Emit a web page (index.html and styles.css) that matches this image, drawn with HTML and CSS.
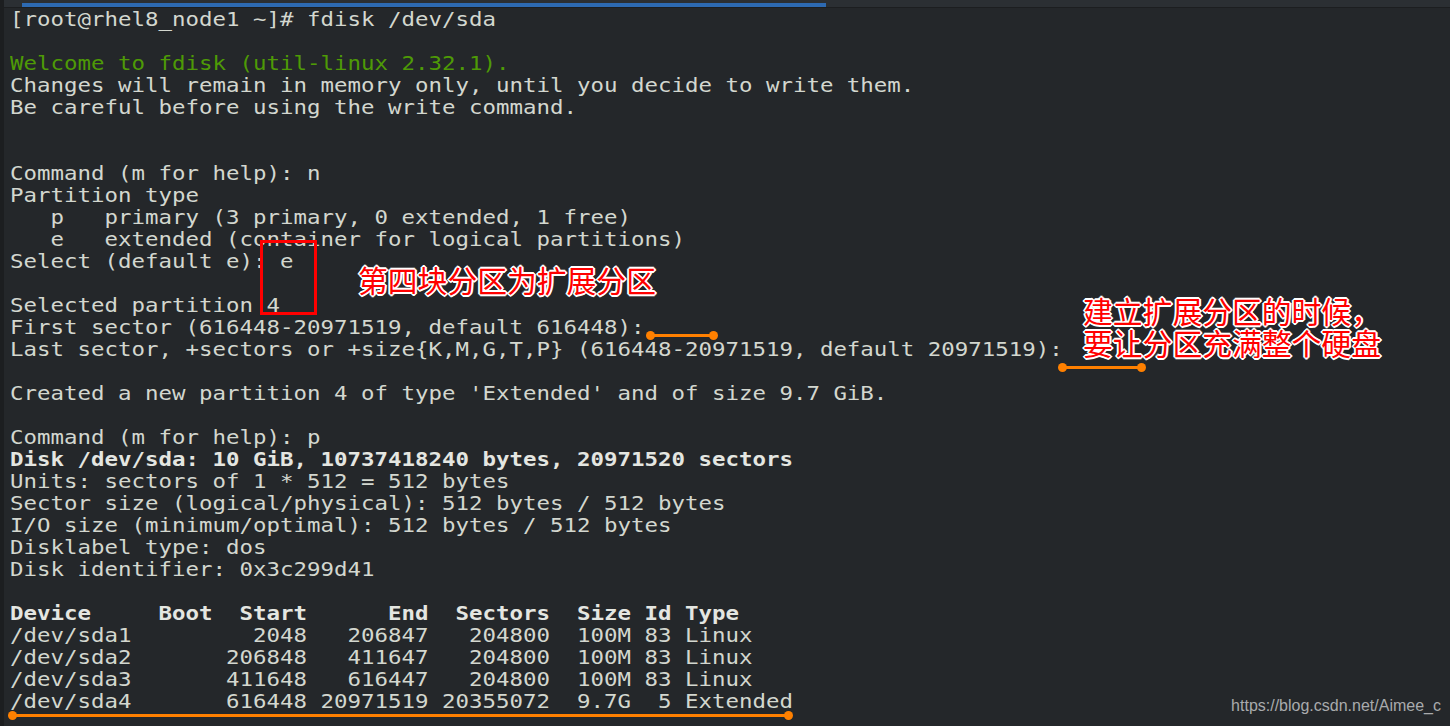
FILE: index.html
```html
<!DOCTYPE html>
<html lang="zh-CN">
<head>
<meta charset="utf-8">
<title>fdisk</title>
<link rel="stylesheet" href="styles.css">
</head>
<body>
<div class="window">
  <div class="topbar"><div class="tab-indicator"></div></div>
  <div class="term-area">
<pre class="term">[root@rhel8_node1 ~]# fdisk /dev/sda

<span class="green">Welcome to fdisk (util-linux 2.32.1).</span>
Changes will remain in memory only, until you decide to write them.
Be careful before using the write command.


Command (m for help): n
Partition type
   p   primary (3 primary, 0 extended, 1 free)
   e   extended (container for logical partitions)
Select (default e): e

Selected partition 4
First sector (616448-20971519, default 616448): 
Last sector, +sectors or +size{K,M,G,T,P} (616448-20971519, default 20971519): 

Created a new partition 4 of type 'Extended' and of size 9.7 GiB.

Command (m for help): p
<b>Disk /dev/sda: 10 GiB, 10737418240 bytes, 20971520 sectors</b>
Units: sectors of 1 * 512 = 512 bytes
Sector size (logical/physical): 512 bytes / 512 bytes
I/O size (minimum/optimal): 512 bytes / 512 bytes
Disklabel type: dos
Disk identifier: 0x3c299d41

<b>Device     Boot  Start      End  Sectors  Size Id Type</b>
/dev/sda1         2048   206847   204800  100M 83 Linux
/dev/sda2       206848   411647   204800  100M 83 Linux
/dev/sda3       411648   616447   204800  100M 83 Linux
/dev/sda4       616448 20971519 20355072  9.7G  5 Extended</pre>
  </div>

  <div class="mark-box"></div>
  <div class="note note-1">第四块分区为扩展分区</div>
  <div class="note note-2">建立扩展分区的时候，<br>要让分区充满整个硬盘</div>

  <div class="uline uline-1"></div>
  <div class="uline uline-2"></div>
  <div class="uline uline-3"></div>

  <div class="watermark">https://blog.csdn.net/Aimee_c</div>
</div>
</body>
</html>
```

FILE: styles.css
```css
html, body {
  margin: 0;
  padding: 0;
  background: #24272a;
}

.window {
  position: relative;
  width: 1450px;
  height: 726px;
  overflow: hidden;
  background: #24272a;
  border-left: 4px solid #1c1e20;
  box-sizing: border-box;
}

.topbar {
  height: 7px;
  background: #2b2f33;
  border-bottom: 1px solid #1c1e20;
  padding-left: 18px;
  display: flex;
  align-items: flex-end;
}

.tab-indicator {
  width: 804px;
  height: 4px;
  background: #2d6ab2;
}

.term-area {
  padding-left: 6px;
}

.term {
  margin: 0;
  font-family: "DejaVu Sans Mono", monospace;
  font-size: 19px;
  line-height: 22px;
  color: #d3d7cf;
  white-space: pre;
  transform: scaleX(1.18);
  transform-origin: 0 0;
}

.term b {
  font-weight: bold;
  color: #e4e6e1;
}

.green {
  color: #4e9a06;
}

.mark-box {
  position: absolute;
  left: 256px;
  top: 240px;
  width: 51px;
  height: 69px;
  border: 3px solid #ff0000;
}

.note {
  position: absolute;
  font-family: "Noto Sans CJK SC", sans-serif;
  font-size: 29.8px;
  line-height: 32px;
  color: #ff0000;
  text-shadow:
    2px 0 0 #fff, -2px 0 0 #fff, 0 2px 0 #fff, 0 -2px 0 #fff,
    1px 1px 0 #fff, -1px -1px 0 #fff, 1px -1px 0 #fff, -1px 1px 0 #fff;
  white-space: nowrap;
}

.note-1 {
  left: 354px;
  top: 263px;
}

.note-2 {
  left: 1079px;
  top: 294px;
}

.uline {
  position: absolute;
  height: 3px;
  background: #ff8000;
}

.uline::before,
.uline::after {
  content: "";
  position: absolute;
  top: -3px;
  width: 9px;
  height: 9px;
  border-radius: 50%;
  background: #ff8000;
}

.uline::before { left: -4px; }
.uline::after { right: -4px; }

.uline-1 {
  left: 646px;
  top: 334px;
  width: 64px;
}

.uline-2 {
  left: 1058px;
  top: 366px;
  width: 80px;
}

.uline-3 {
  left: 8px;
  top: 714px;
  width: 777px;
}

.watermark {
  position: absolute;
  right: 9px;
  top: 697px;
  font-family: "Liberation Sans", Arial, sans-serif;
  font-size: 16px;
  color: #a9abad;
}
```
